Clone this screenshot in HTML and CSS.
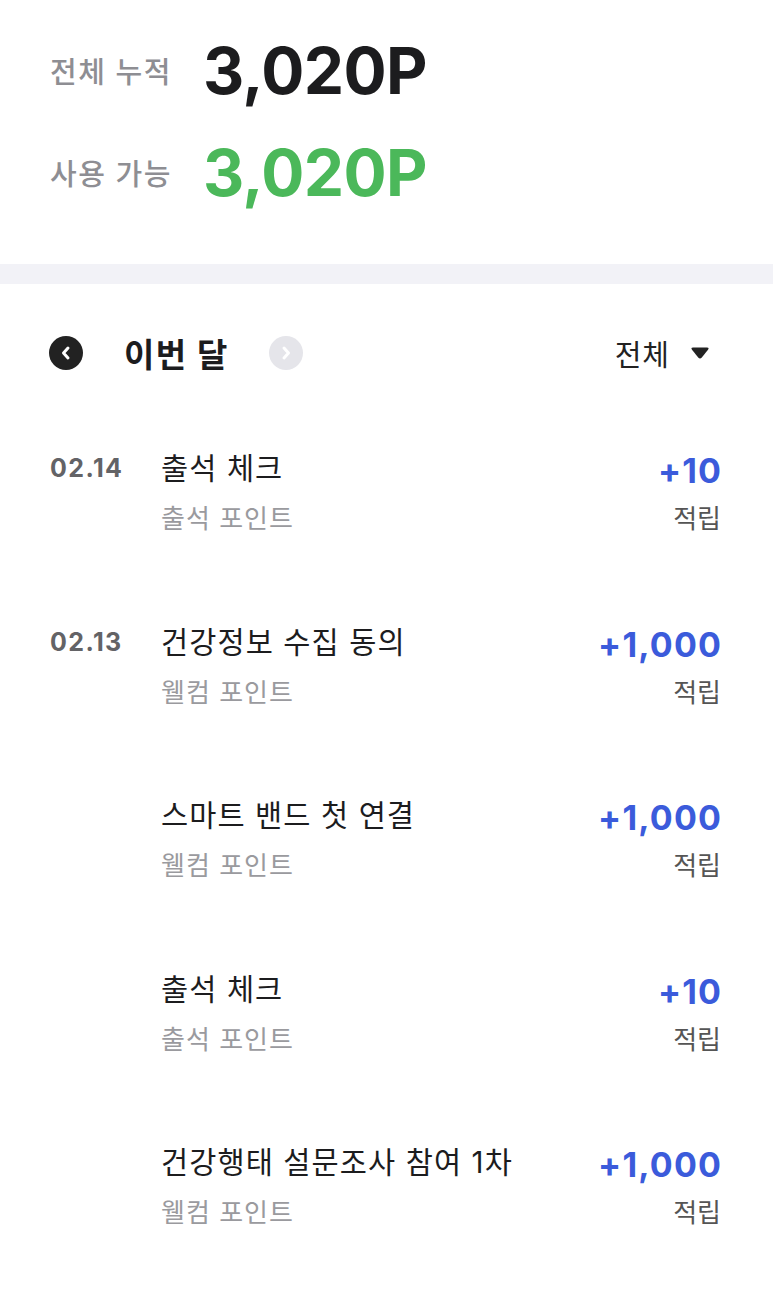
FILE: index.html
```html
<!DOCTYPE html>
<html lang="ko">
<head>
  <meta charset="UTF-8">
  <title>포인트 내역</title>
  <link rel="stylesheet" href="styles.css">
</head>
<body>

  <div class="summary">
    <div class="summary-row">
      <span class="summary-label">전체 누적</span>
      <span class="summary-value">3,020P</span>
    </div>
    <div class="summary-row">
      <span class="summary-label">사용 가능</span>
      <span class="summary-value green">3,020P</span>
    </div>
  </div>

  <div class="divider"></div>

  <div class="month-bar">
    <div class="month-nav">
      <span class="circle-btn dark">
        <svg width="34" height="34" viewBox="0 0 34 34"><path d="M19 12 L14.5 17 L19 22" fill="none" stroke="#fff" stroke-width="3" stroke-linecap="round" stroke-linejoin="round"/></svg>
      </span>
      <span class="month-title">이번 달</span>
      <span class="circle-btn light">
        <svg width="34" height="34" viewBox="0 0 34 34"><path d="M15 12 L19.5 17 L15 22" fill="none" stroke="#fff" stroke-width="3" stroke-linecap="round" stroke-linejoin="round"/></svg>
      </span>
    </div>
    <div class="filter">
      <span>전체</span>
      <svg width="20" height="14" viewBox="0 0 20 14"><path d="M3 1.5 H17 Q19.5 1.5 18 3.8 L11.8 11.6 Q10 13.6 8.2 11.6 L2 3.8 Q0.5 1.5 3 1.5 Z" fill="#222"/></svg>
    </div>
  </div>

  <div class="history">
    <div class="item">
      <div class="date">02.14</div>
      <div class="info">
        <div class="title">출석 체크</div>
        <div class="sub">출석 포인트</div>
      </div>
      <div class="amount">
        <div class="points">+10</div>
        <div class="kind">적립</div>
      </div>
    </div>
    <div class="item">
      <div class="date">02.13</div>
      <div class="info">
        <div class="title">건강정보 수집 동의</div>
        <div class="sub">웰컴 포인트</div>
      </div>
      <div class="amount">
        <div class="points">+1,000</div>
        <div class="kind">적립</div>
      </div>
    </div>
    <div class="item">
      <div class="date"></div>
      <div class="info">
        <div class="title">스마트 밴드 첫 연결</div>
        <div class="sub">웰컴 포인트</div>
      </div>
      <div class="amount">
        <div class="points">+1,000</div>
        <div class="kind">적립</div>
      </div>
    </div>
    <div class="item">
      <div class="date"></div>
      <div class="info">
        <div class="title">출석 체크</div>
        <div class="sub">출석 포인트</div>
      </div>
      <div class="amount">
        <div class="points">+10</div>
        <div class="kind">적립</div>
      </div>
    </div>
    <div class="item">
      <div class="date"></div>
      <div class="info">
        <div class="title">건강행태 설문조사 참여 1차</div>
        <div class="sub">웰컴 포인트</div>
      </div>
      <div class="amount">
        <div class="points">+1,000</div>
        <div class="kind">적립</div>
      </div>
    </div>
  </div>

</body>
</html>
```

FILE: styles.css
```css
body {
  margin: 0;
  background: #fff;
  font-family: "Inter", "Noto Sans CJK KR", sans-serif;
  color: #1c1c1e;
}

/* Summary */
.summary {
  padding: 30px 0 52px 50px;
}
.summary-row {
  display: flex;
  align-items: center;
  height: 80px;
}
.summary-row + .summary-row {
  margin-top: 22px;
}
.summary-label {
  width: 153px;
  font-size: 29px;
  font-weight: 500;
  letter-spacing: 1.5px;
  color: #8e8e93;
}
.summary-value {
  font-size: 64px;
  font-weight: 700;
  letter-spacing: -0.6px;
  color: #1c1c1e;
}
.summary-value.green {
  color: #4bb85a;
}

.divider {
  height: 20px;
  background: #f2f2f7;
}

/* Month bar */
.month-bar {
  display: flex;
  justify-content: space-between;
  align-items: center;
  height: 60px;
  margin-top: 39px;
  padding: 0 63px 0 49px;
}
.month-nav {
  display: flex;
  align-items: center;
}
.circle-btn {
  display: flex;
  width: 34px;
  height: 34px;
  border-radius: 50%;
}
.circle-btn.dark {
  background: #222;
}
.circle-btn.light {
  background: #e5e5ea;
}
.month-title {
  margin: 0 40px 0 41px;
  font-size: 33px;
  font-weight: 700;
  letter-spacing: 1.5px;
  color: #1c1c1e;
}
.filter {
  display: flex;
  align-items: center;
  gap: 20px;
  font-size: 29px;
  letter-spacing: 1px;
  color: #222;
}

/* History list */
.history {
  margin-top: 65px;
}
.item {
  display: flex;
  height: 173.5px;
  padding: 0 52px 0 50px;
}
.date {
  width: 111px;
  line-height: 40px;
  font-size: 25px;
  font-weight: 700;
  letter-spacing: 1.4px;
  color: #636366;
}
.info {
  flex: 1;
}
.title {
  line-height: 40px;
  font-size: 29.5px;
  letter-spacing: 1.1px;
  color: #1c1c1e;
}
.sub {
  margin-top: 11px;
  line-height: 40px;
  font-size: 26px;
  letter-spacing: 1px;
  color: #9a9a9e;
}
.amount {
  text-align: right;
}
.points {
  padding-top: 3px;
  line-height: 40px;
  font-size: 34px;
  font-weight: 700;
  letter-spacing: 1.2px;
  margin-right: -1.2px;
  color: #3b5bdb;
}
.kind {
  margin-top: 8px;
  line-height: 40px;
  font-size: 26px;
  color: #555;
}
```
